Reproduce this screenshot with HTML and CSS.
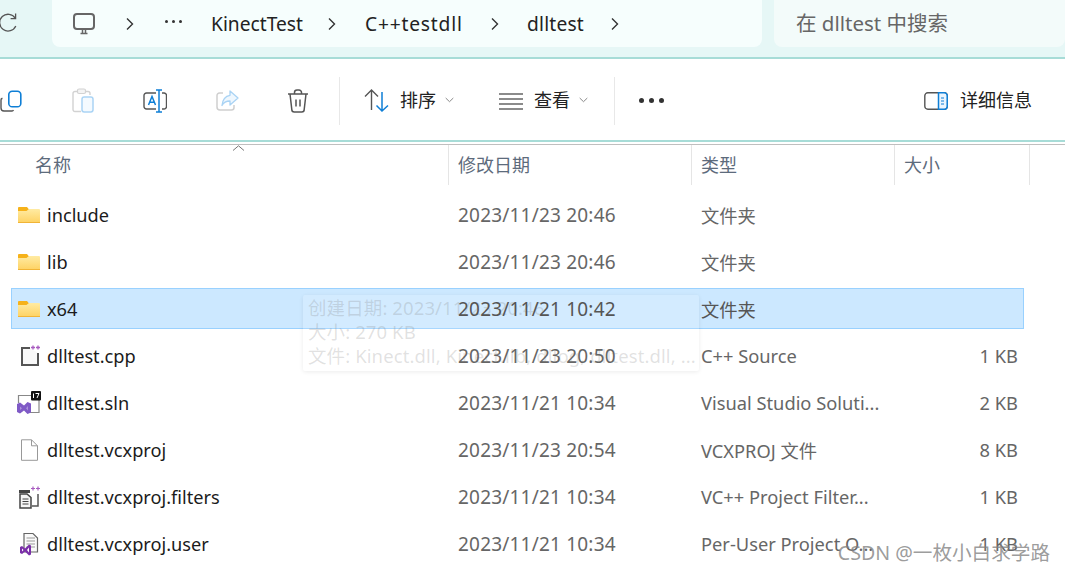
FILE: index.html
```html
<!DOCTYPE html>
<html lang="zh-CN">
<head>
<meta charset="utf-8">
<title>dlltest</title>
<link rel="stylesheet" href="styles.css">
</head>
<body>
<div class="window">
  <header class="topbar">
    <svg class="refresh" width="20" height="24" viewBox="0 0 20 24"><path d="M15.2 7.2A8.4 8.4 0 1 0 15.8 15" fill="none" stroke="#555" stroke-width="1.3"/><path d="M15.6 2.6V7.6H10.6" fill="none" stroke="#555" stroke-width="1.3"/></svg>
    <nav class="address">
      <svg class="pc" width="22" height="22" viewBox="0 0 22 22"><rect x="1" y="1" width="20" height="15" rx="3" fill="none" stroke="#666" stroke-width="2"/><path d="M7.5 20.5H14.5M9.5 16V20M12.5 16V20" stroke="#666" stroke-width="1.5" fill="none"/></svg>
      <svg class="chev c1" width="8" height="14" viewBox="0 0 8 14"><path d="M1 1.5L6.5 7L1 12.5" fill="none" stroke="#333" stroke-width="1.4"/></svg>
      <span class="crumb-dots"><i></i><i></i><i></i></span>
      <span class="crumb k">KinectTest</span>
      <svg class="chev c2" width="8" height="14" viewBox="0 0 8 14"><path d="M1 1.5L6.5 7L1 12.5" fill="none" stroke="#333" stroke-width="1.4"/></svg>
      <span class="crumb c">C++testdll</span>
      <svg class="chev c3" width="8" height="14" viewBox="0 0 8 14"><path d="M1 1.5L6.5 7L1 12.5" fill="none" stroke="#333" stroke-width="1.4"/></svg>
      <span class="crumb d">dlltest</span>
      <svg class="chev c4" width="8" height="14" viewBox="0 0 8 14"><path d="M1 1.5L6.5 7L1 12.5" fill="none" stroke="#333" stroke-width="1.4"/></svg>
    </nav>
    <div class="search">在 dlltest 中搜索</div>
  </header>

  <div class="toolbar">
    <svg class="tool t-copy" width="22" height="22" viewBox="0 0 22 22"><path d="M2.5 8.5H2A1.5 1.5 0 0 0 1 10V18A3 3 0 0 0 4 21H12A2 2 0 0 0 13.5 20" fill="none" stroke="#555" stroke-width="1.4"/><rect x="8.8" y="1.2" width="12" height="15.6" rx="3.4" fill="none" stroke="#0f7fd6" stroke-width="1.6"/></svg>
    <svg class="tool t-paste" width="22" height="26" viewBox="0 0 22 26"><path d="M9 23.5H3A2 2 0 0 1 1 21.5V5.5A2 2 0 0 1 3 3.5H16A2 2 0 0 1 18 5.5V7" fill="none" stroke="#d2d2d2" stroke-width="1.4"/><rect x="5.5" y="1" width="8" height="4.5" rx="1.5" fill="#f4f4f4" stroke="#d2d2d2" stroke-width="1.2"/><rect x="10" y="9" width="11" height="15" rx="2.2" fill="#f4faff" stroke="#aad4f5" stroke-width="1.5"/></svg>
    <svg class="tool t-rename" width="24" height="24" viewBox="0 0 24 24"><path d="M13 4H3.5A2.5 2.5 0 0 0 1 6.5V17.5A2.5 2.5 0 0 0 3.5 20H13M19 4H21A2.5 2.5 0 0 1 23.500 6.500V17.500A2.500 2.500 0 0 1 21 20H19" fill="none" stroke="#555" stroke-width="1.400"/><path d="M13 1H19M16 1V23M13 23H19" fill="none" stroke="#0f7fd6" stroke-width="1.500"/><path d="M5.500 16L9 7.500L12.500 16M6.800 13.300H11.200" fill="none" stroke="#0f7fd6" stroke-width="1.500"/></svg>
    <svg class="tool t-share" width="23" height="22" viewBox="0 0 23 22"><path d="M7 3H3.500A2.500 2.500 0 0 0 1 5.500V17A3 3 0 0 0 4 20H15.500A2.500 2.500 0 0 0 18 17.500V15" fill="none" stroke="#cfcfcf" stroke-width="1.500"/><path d="M14 1L22 8L14 15V11C10 11 7.500 12.500 6 15.500C6.500 10 9.500 6 14 5.300Z" fill="#eef7fe" stroke="#a9d3f4" stroke-width="1.300" stroke-linejoin="round"/></svg>
    <svg class="tool t-trash" width="22" height="24" viewBox="0 0 22 24"><path d="M1 5H21M7.500 5V3.500A2.500 2.500 0 0 1 10 1H12A2.500 2.500 0 0 1 14.500 3.500V5M3 5L4.800 20.500A2.500 2.500 0 0 0 7.300 23H14.700A2.500 2.500 0 0 0 17.200 20.500L19 5M9 10.500V17.500M13 10.500V17.500" fill="none" stroke="#555" stroke-width="1.500"/></svg>
    <i class="sep s1"></i>
    <svg class="tool t-sort" width="25" height="24" viewBox="0 0 25 24"><path d="M1 7.500L7.500 1L14 7.500M7.500 1V21" fill="none" stroke="#555" stroke-width="1.400"/><path d="M12.500 16.500L18 22L24 16.500M18 22V3" fill="none" stroke="#0f7fd6" stroke-width="1.500"/></svg>
    <span class="tool-label l-sort">排序</span>
    <svg class="mini m1" width="9" height="6" viewBox="0 0 9 6"><path d="M.7 1L4.500 4.700L8.300 1" fill="none" stroke="#888" stroke-width="1"/></svg>
    <svg class="tool t-view" width="24" height="18" viewBox="0 0 24 18"><path d="M0 2H24M0 7H24M0 12H24M0 17H24" stroke="#666" stroke-width="1.500"/></svg>
    <span class="tool-label l-view">查看</span>
    <svg class="mini m2" width="9" height="6" viewBox="0 0 9 6"><path d="M.7 1L4.500 4.700L8.300 1" fill="none" stroke="#888" stroke-width="1"/></svg>
    <i class="sep s2"></i>
    <span class="more"><i></i><i></i><i></i></span>
    <svg class="tool t-detail" width="24" height="18" viewBox="0 0 24 18"><rect x=".8" y=".8" width="22.400" height="16.400" rx="3" fill="none" stroke="#555" stroke-width="1.400"/><path d="M14.500 .8H20.200A3 3 0 0 1 23.200 3.800V14.200A3 3 0 0 1 20.200 17.200H14.500Z" fill="#eaf5fe" stroke="#0f7fd6" stroke-width="1.500"/><path d="M17 6H20M17 9H20M17 12H20" stroke="#0f7fd6" stroke-width="1.200"/></svg>
    <span class="tool-label l-detail">详细信息</span>
  </div>

  <div class="columns">
    <span class="col col-name">名称<svg class="sort-up" width="13" height="6" viewBox="0 0 13 6"><path d="M1 5.500L6.500 .8L12 5.500" fill="none" stroke="#777" stroke-width="1"/></svg></span>
    <span class="col col-date">修改日期</span>
    <span class="col col-type">类型</span>
    <span class="col col-size">大小</span>
  </div>

  <main class="list">
    <div class="row">
      <span class="name"><svg class="ico" width="24" height="18" viewBox="0 0 24 18"><use href="#folder"/></svg>include</span>
      <span class="date">2023/11/23 20:46</span><span class="type">文件夹</span><span class="size"></span>
    </div>
    <div class="row">
      <span class="name"><svg class="ico" width="24" height="18" viewBox="0 0 24 18"><use href="#folder"/></svg>lib</span>
      <span class="date">2023/11/23 20:46</span><span class="type">文件夹</span><span class="size"></span>
    </div>
    <div class="row selected">
      <span class="name"><svg class="ico" width="24" height="18" viewBox="0 0 24 18"><use href="#folder"/></svg>x64</span>
      <span class="date">2023/11/21 10:42</span><span class="type">文件夹</span><span class="size"></span>
    </div>
    <div class="row">
      <span class="name"><svg class="ico" width="24" height="24" viewBox="0 0 24 24"><path d="M13 4H5V21H21V9" fill="#f8f8f8" stroke="#555" stroke-width="2"/><path d="M14 3.500H18M16 1.500V5.500M19 3.500H23M21 1.500V5.500" stroke="#a85cc0" stroke-width="1.300"/></svg>dlltest.cpp</span>
      <span class="date">2023/11/23 20:50</span><span class="type">C++ Source</span><span class="size">1 KB</span>
    </div>
    <div class="row">
      <span class="name"><svg class="ico" width="24" height="24" viewBox="0 0 24 24"><path d="M1.500 12V4.500H14M22 9V21.500H12" fill="#fff" stroke="#888" stroke-width="1.200"/><rect x="14" y="0" width="10" height="9.500" rx="1" fill="#111"/><path d="M16.500 2.500V7M18.500 2.500H22L20 7" stroke="#fff" stroke-width="1" fill="none"/><path d="M0 13L3 11.500L7 14.500L10.500 11L14 12.500V21.500L10.500 23L7 19.500L3 22.500L0 21Z" fill="#7f5ac6"/><path d="M3 15.500V19L5 17.200ZM11 15L9 17.200L11 19.500Z" fill="#fff" opacity=".35"/></svg>dlltest.sln</span>
      <span class="date">2023/11/21 10:34</span><span class="type">Visual Studio Soluti...</span><span class="size">2 KB</span>
    </div>
    <div class="row">
      <span class="name"><svg class="ico" width="24" height="24" viewBox="0 0 24 24"><path d="M4.500 1.800H14.500L20.500 7.800V22.300H4.500Z" fill="#fff" stroke="#999" stroke-width="1"/><path d="M14.500 1.800V7.800H20.500" fill="none" stroke="#999" stroke-width="1"/></svg>dlltest.vcxproj</span>
      <span class="date">2023/11/23 20:54</span><span class="type">VCXPROJ 文件</span><span class="size">8 KB</span>
    </div>
    <div class="row">
      <span class="name"><svg class="ico" width="24" height="24" viewBox="0 0 24 24"><path d="M2 5H13V8H2Z" fill="#444"/><path d="M21 9V21H15" fill="none" stroke="#555" stroke-width="1.500"/><path d="M14 3.500H18M16 1.500V5.500M19 3.500H23M21 1.500V5.500" stroke="#a85cc0" stroke-width="1.200"/><path d="M3 9H10L14 12.500V23H3Z" fill="#f5f5f5" stroke="#444" stroke-width="1.500"/><path d="M5.500 14H11.500M5.500 16.500H11.500M5.500 19H11.500" stroke="#444" stroke-width="1"/></svg>dlltest.vcxproj.filters</span>
      <span class="date">2023/11/21 10:34</span><span class="type">VC++ Project Filter...</span><span class="size">1 KB</span>
    </div>
    <div class="row">
      <span class="name"><svg class="ico" width="24" height="24" viewBox="0 0 24 24"><path d="M7 1.500H16L20.500 6V20H7Z" fill="#fafafa" stroke="#666" stroke-width="1.200"/><path d="M9.500 6H18M9.500 9H18M9.500 12H18M9.500 15H18" stroke="#999" stroke-width="1"/><path d="M3 15L5 14L8 16.500L12 12.500L14 13.500V22.500L12 23.500L8 19.500L5 22L3 21Z" fill="#7a2fa8"/><path d="M5 16.500V19.500L6.500 18ZM12 15.500L10 18L12 20.500Z" fill="#fff"/></svg>dlltest.vcxproj.user</span>
      <span class="date">2023/11/21 10:34</span><span class="type">Per-User Project O...</span><span class="size">1 KB</span>
    </div>
  </main>

  <div class="tip">
    <div>创建日期: 2023/11/23 20:46</div>
    <div>大小: 270 KB</div>
    <div>文件: Kinect.dll, Kinect.lib, dllog, dlltest.dll, ...</div>
  </div>
  <div class="mark">CSDN @一枚小白求学路</div>
</div>
<svg class="defs" width="0" height="0"><defs>
  <linearGradient id="fg" x1="0" y1="0" x2="0" y2="1"><stop offset="0" stop-color="#ffeba3"/><stop offset="1" stop-color="#fed262"/></linearGradient>
  <symbol id="folder" viewBox="0 0 24 18"><path d="M1 1.800A1 1 0 0 1 2 1H10L12 3.500V5H1Z" fill="#f6b21a"/><path d="M1 5H9.500L12 3H22A1 1 0 0 1 23 4V16A1 1 0 0 1 22 17H2A1 1 0 0 1 1 16Z" fill="url(#fg)"/><path d="M1 16.500H23" stroke="#f1b436" stroke-width="1"/></symbol>
</defs></svg>
</body>
</html>
```
FILE: styles.css
```css
* { box-sizing: border-box; }
html, body { margin: 0; padding: 0; }
body { background: #fff; font-family: "Noto Sans", "Noto Sans CJK SC", sans-serif; color: #1b1b1b; overflow: hidden; }
.window { position: relative; width: 1065px; height: 573px; overflow: hidden; }
.defs { position: absolute; }

.topbar { display: flex; height: 59px; padding-bottom: 10px; background: #e6f7f6; border-bottom: 2px solid #a7dcd7; }
.refresh { margin: 11px 0 0 0; flex: none; width: 20px; }
.address { display: flex; align-items: center; width: 710px; margin-left: 32px; background: #f6fefd; border-radius: 0 0 8px 8px; flex: none; }
.pc { margin-left: 21px; }
.chev { flex: none; }
.c1 { margin-left: 31px; }
.crumb-dots { display: flex; gap: 4px; width: 17px; margin-left: 31px; margin-top: -4px; flex: none; }
.crumb-dots i { width: 3px; height: 3px; border-radius: 50%; background: #333; flex: none; }
.crumb { font-size: 19.2px; color: #222; white-space: nowrap; flex: none; }
.k { margin-left: 29px; width: 117px; }
.c { margin-left: 29px; width: 126px; letter-spacing: .8px; }
.d { margin-left: 28px; width: 84px; letter-spacing: .2px; }
.search { flex: 1; margin-left: 12px; background: #f3fbfa; border-radius: 0 0 8px 8px; padding-left: 22px; line-height: 47px; font-size: 20.5px; color: #666; white-space: nowrap; }

.toolbar { display: flex; align-items: center; height: 83px; border-bottom: 2px solid #a7dcd7; padding-top: 2px; }
.tool { flex: none; }
.t-copy { margin-left: 0; }
.t-paste { margin-left: 50px; }
.t-rename { margin-left: 49px; }
.t-share { margin-left: 49px; }
.t-trash { margin-left: 48px; }
.sep { flex: none; width: 1px; height: 48px; background: #e8e8e8; }
.s1 { margin-left: 30px; }
.t-sort { margin-left: 24px; }
.tool-label { font-size: 18px; line-height: 24px; margin-top: -1px; color: #222; white-space: nowrap; }
.l-sort { margin-left: 11px; }
.mini { flex: none; margin-left: 9px; margin-top: -2px; }
.t-view { margin-left: 45px; }
.l-view { margin-left: 11px; }
.s2 { margin-left: 26px; }
.more { display: flex; gap: 5px; margin-left: 24px; }
.more i { width: 5px; height: 5px; border-radius: 50%; background: #333; }
.t-detail { margin-left: 260px; }
.l-detail { margin-left: 12px; }

.columns { display: flex; height: 43px; margin-top: 2px; border-top: 1px solid #bfbfbf; width: 1065px; position: relative; }
.col { display: flex; align-items: center; height: 40px; padding-bottom: 2px; font-size: 18px; color: #5d6b7c; border-right: 1px solid #e5e5e5; padding-left: 9px; flex: none; }
.col-name { width: 449px; padding-left: 35px; position: relative; }
.col-date { width: 243px; }
.col-type { width: 203px; }
.col-size { width: 135px; }
.sort-up { position: absolute; left: 232px; top: 0; }

.list { display: flex; flex-direction: column; gap: 6px; padding: 7px 0 0 11px; }
.row { display: grid; grid-template-columns: 446px 243px 203px 114px; align-items: center; width: 1013px; height: 41px; border: 1px solid transparent; font-size: 18.3px; color: #666; white-space: nowrap; }
.selected { background: #cce8ff; border-color: #99d1ff; }
.name { display: flex; align-items: center; color: #1b1b1b; padding-left: 5px; font-size: 18.2px; }
.ico { flex: none; width: 24px; margin-right: 6px; }
.date { font-size: 19px; letter-spacing: .2px; position: relative; z-index: 2; }
.size { text-align: right; }
.selected .date, .selected .type { color: #555; }

.tip { position: absolute; z-index: 1; left: 303px; top: 295px; width: 396px; height: 76px; padding: 1px 5px 0; background: rgba(255,255,255,.15); box-shadow: 0 1px 4px rgba(0,0,0,.08); border-radius: 2px; font-size: 18.5px; letter-spacing: .1px; line-height: 24px; color: rgba(120,120,120,.22); white-space: nowrap; overflow: hidden; }
.mark { position: absolute; z-index: 3; right: 15px; bottom: 7px; font-size: 19.6px; color: rgba(130,130,130,.8); white-space: nowrap; }
```
